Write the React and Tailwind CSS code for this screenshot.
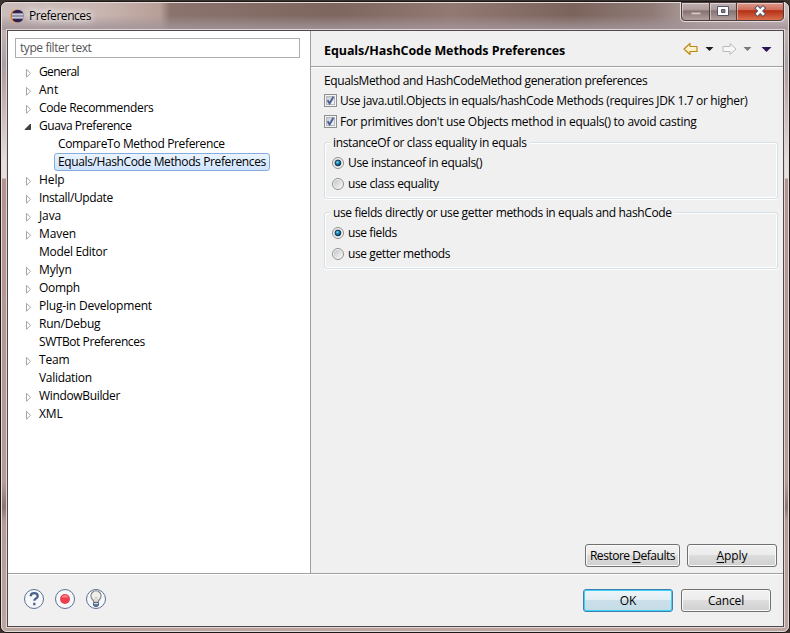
const ROWS = [
  ['General', 'tracking-[-0.6px]', 'closed'],
  ['Ant', 'tracking-[0px]', 'closed'],
  ['Code Recommenders', 'tracking-[-0.34px]', 'closed'],
  ['Guava Preference', 'tracking-[-0.45px]', 'open'],
  ['CompareTo Method Preference', 'tracking-[-0.36px]', 'child'],
  ['Equals/HashCode Methods Preferences', 'tracking-[-0.38px]', 'selected'],
  ['Help', 'tracking-[-0.1px]', 'closed'],
  ['Install/Update', 'tracking-[-0.36px]', 'closed'],
  ['Java', 'tracking-[-0.1px]', 'closed'],
  ['Maven', 'tracking-[-0.1px]', 'closed'],
  ['Model Editor', 'tracking-[-0.3px]', 'leaf'],
  ['Mylyn', 'tracking-[-0.1px]', 'closed'],
  ['Oomph', 'tracking-[-0.3px]', 'closed'],
  ['Plug-in Development', 'tracking-[-0.2px]', 'closed'],
  ['Run/Debug', 'tracking-[-0.2px]', 'closed'],
  ['SWTBot Preferences', 'tracking-[-0.43px]', 'leaf'],
  ['Team', 'tracking-[-0.2px]', 'closed'],
  ['Validation', 'tracking-[-0.3px]', 'leaf'],
  ['WindowBuilder', 'tracking-[-0.34px]', 'closed'],
  ['XML', 'tracking-[-0.1px]', 'closed'],
];

function Twisty({ kind }) {
  return (
    <svg className="w-[20px] h-[18px] shrink-0" viewBox="0 0 20 18">
      {kind === 'closed' && <path d="M7.500 6.300v8l4-4z" fill="#fff" stroke="#a6a6a6" />}
      {kind === 'open' && <path d="M11.500 7v5.500H6z" fill="#404040" stroke="#262626" strokeWidth=".8" />}
    </svg>
  );
}

function TreeRow({ label, track, kind }) {
  if (kind === 'child' || kind === 'selected') {
    const look = kind === 'selected'
      ? 'border-[#84acdd] bg-linear-to-b from-[#ebf4fe] to-[#cfe4fe]'
      : 'border-transparent';
    return (
      <div className="flex h-[18px] pl-[35px]">
        <span className={`flex h-[18px] items-center rounded-[3px] border px-[3px] whitespace-nowrap ${look} ${kind === 'selected' ? 'w-[216px]' : ''} ${track}`}>{label}</span>
      </div>
    );
  }
  return (
    <div className="flex h-[18px] items-center">
      <Twisty kind={kind} />
      <span className={`whitespace-nowrap ${track}`}>{label}</span>
    </div>
  );
}

function Check({ children, track }) {
  return (
    <div className="flex h-[21px] items-center">
      <svg className="mr-[3px] size-[13px] shrink-0" viewBox="0 0 13 13">
        <defs>
          <linearGradient id="ck" x1="0" y1="0" x2="1" y2="1">
            <stop offset="0" stopColor="#c4c9cf" />
            <stop offset="1" stopColor="#f6f6f6" />
          </linearGradient>
        </defs>
        <rect x=".5" y=".5" width="12" height="12" fill="#f4f4f4" stroke="#8e8f8f" />
        <rect x="2.5" y="2.5" width="8" height="8" fill="url(#ck)" stroke="#b5bac1" />
        <path d="M3.6 6.3l2 3.2L9.4 2.8" fill="none" stroke="#4a5f97" strokeWidth="1.9" />
      </svg>
      <span className={`pt-px whitespace-nowrap ${track}`}>{children}</span>
    </div>
  );
}

function Radio({ on, children, track }) {
  return (
    <div className="flex h-[21px] items-center pl-[7px]">
      <svg className="mr-[4px] size-[12px] shrink-0" viewBox="0 0 12 12">
        <defs>
          <linearGradient id="rd" x1="0" y1="0" x2="1" y2="1">
            <stop offset="0" stopColor="#bfc3c8" />
            <stop offset="1" stopColor="#f8f8f8" />
          </linearGradient>
          <radialGradient id="dot" cx=".4" cy=".35" r=".6">
            <stop offset="0" stopColor="#7fdcf8" />
            <stop offset=".5" stopColor="#1b86b5" />
            <stop offset="1" stopColor="#0b3a5c" />
          </radialGradient>
        </defs>
        <circle cx="6" cy="6" r="5.5" fill="#f4f4f4" stroke="#8e8f8f" />
        <circle cx="6" cy="6" r="4" fill="url(#rd)" />
        {on && <circle cx="6" cy="6" r="2.9" fill="url(#dot)" stroke="#16344e" strokeWidth=".9" />}
      </svg>
      <span className={`pt-px whitespace-nowrap ${track}`}>{children}</span>
    </div>
  );
}

function Group({ title, track, className, children }) {
  return (
    <fieldset className={`mx-0 w-[454px] rounded-[3px] border border-[#d5dfe5] shadow-[inset_1px_1px_0_#fff,inset_-1px_-1px_0_#fff,0_1px_0_#fff] ${className}`}>
      <div className="-mt-[9px] ml-[5px] flex h-[18px] w-fit items-center bg-[#f0f0f0] px-[3px]">
        <span className={`whitespace-nowrap ${track}`}>{title}</span>
      </div>
      {children}
    </fieldset>
  );
}

function Button({ children, className, primary }) {
  const look = primary
    ? 'border-[#3c7fb1] bg-[linear-gradient(#edf4f8_0%,#e2eef4_47%,#cbdfe9_50%,#c5dce7_100%)] shadow-[inset_0_0_0_1px_#3fd0f7]'
    : 'border-[#707070] bg-[linear-gradient(#f2f2f2_0%,#ebebeb_48%,#dddddd_50%,#cfcfcf_100%)] shadow-[inset_0_0_0_1px_#fafafa]';
  return (
    <button className={`flex h-[23px] items-center justify-center rounded-[3px] border pt-px whitespace-nowrap ${look} ${className}`}>
      {children}
    </button>
  );
}

function TitleBar() {
  return (
    <div className="flex h-[26px] items-start">
      <svg className="mt-[6px] ml-[4px] size-[14px]" viewBox="0 0 14 14">
        <circle cx="6.6" cy="7" r="6.6" fill="#f09431" />
        <circle cx="7.7" cy="7" r="6.3" fill="#2c2255" />
        <path d="M1.8 5.1h11.8M1.4 7h12.5M1.8 8.9h11.8" stroke="#fff" strokeWidth="1.1" />
      </svg>
      <span className="mt-[4px] ml-[5px] leading-[18px] tracking-[-0.45px] [text-shadow:0_0_6px_#fff,0_0_8px_#fff,0_0_14px_#fff]">Preferences</span>
      <svg className="-mt-px ml-auto h-[20px] w-[105px]" viewBox="0 0 105 20">
        <defs>
          <linearGradient id="cap" x2="0" y2="1">
            <stop offset="0" stopColor="#c3b5b4" />
            <stop offset=".46" stopColor="#aa9997" />
            <stop offset=".48" stopColor="#85716f" />
            <stop offset="1" stopColor="#b19f9e" />
          </linearGradient>
          <linearGradient id="cls" x2="0" y2="1">
            <stop offset="0" stopColor="#dfa298" />
            <stop offset=".44" stopColor="#cf6c58" />
            <stop offset=".48" stopColor="#b52f15" />
            <stop offset="1" stopColor="#da6f4b" />
          </linearGradient>
        </defs>
        <path d="M.5 0v15q0 4.5 4.500 4.500h95q4.500 0 4.500-4.500V0" fill="none" stroke="#e5dbdb" />
        <path d="M1.500 0v14q0 4 4 4h24.500V0z" fill="url(#cap)" />
        <path d="M30 0h27v18H30z" fill="url(#cap)" />
        <path d="M57 0h46.500v14q0 4-4 4H57z" fill="url(#cls)" />
        <path d="M1.500 .500h102v13.500q0 4.500-4.500 4.500H6q-4.500 0-4.500-4.500zM29.500 0v18M56.500 0v18" fill="none" stroke="#4b3b3b" />
        <path d="M2.500 1.500h26M30.500 1.500h25M57.500 1.500h45M30.500 1.500v16M2.500 1.500v13M57.500 1.500v16" fill="none" stroke="#fff" opacity=".45" />
        <rect x="11.500" y="10.500" width="9" height="2" fill="#d5cecd" stroke="#a39796" strokeWidth=".6" />
        <path d="M37.500 4.500h11v9h-11zM41.500 7.500v3h3.500V7.500z" fillRule="evenodd" fill="#fff" stroke="#56566c" />
        <path d="M77.500 6.200l5.500 5.600m0-5.600l-5.500 5.600" stroke="#565365" strokeWidth="4.600" strokeLinecap="square" />
        <path d="M77.500 6.200l5.500 5.600m0-5.600l-5.500 5.600" stroke="#fff" strokeWidth="2.600" strokeLinecap="square" />
      </svg>
    </div>
  );
}

function NavIcons() {
  return (
    <svg className="mt-[11px] ml-auto mr-[10px] h-[14px] w-[90px]" viewBox="0.5 0 90 14">
      <defs>
        <linearGradient id="arrow" x2="0" y2="1">
          <stop offset="0" stopColor="#fffdf0" />
          <stop offset="1" stopColor="#fae6a4" />
        </linearGradient>
      </defs>
      <path d="M1.500 7L7.500 1.500v3h7v5h-7v3z" fill="url(#arrow)" stroke="#c08716" strokeWidth="1.200" strokeLinejoin="round" />
      <path d="M23 5h8l-4 4z" fill="#1c1c1c" />
      <path d="M53.500 7L47.500 1.500v3h-7v5h7v3z" fill="#f7f7f7" stroke="#b9b9b9" strokeLinejoin="round" />
      <path d="M61 5h8l-4 4z" fill="#777" />
      <path d="M79 5h10l-5 5z" fill="#2b1450" />
    </svg>
  );
}

function FooterIcons() {
  return (
    <svg className="-mt-[2px] h-[22px] w-[84px]" viewBox="0 0 84 22">
      <g fill="#f7f8f9" stroke="#5d7196">
        <circle cx="10" cy="11" r="9.500" />
        <circle cx="41" cy="11" r="9.500" />
        <circle cx="72" cy="11" r="9.500" />
      </g>
      <path d="M6.700 8.300q0-3.200 3.500-3.200t3.500 2.900q0 1.600-1.700 2.500t-1.700 2.300M10.300 14.800v2.400" fill="none" stroke="#4a628c" strokeWidth="2.300" />
      <circle cx="41" cy="11" r="5" fill="#ed3f4d" />
      <path d="M37.500 9.500a3.700 3.700 0 0 1 7 0z" fill="#f7848a" />
      <path d="M70 14.500q0-1.700-1.700-3.300a5 5 0 1 1 7.400 0q-1.700 1.600-1.700 3.300z" fill="#eeeeea" stroke="#8b8780" strokeWidth="1.300" />
      <path d="M71 13.500V9.500h2v4" fill="none" stroke="#c5c1b8" strokeWidth=".8" />
      <path d="M69.500 14.500h5v3l-1.500 1h-2l-1.500-1z" fill="#d9e0ea" stroke="#4f678f" />
      <path d="M70 17h4" stroke="#3f5780" strokeWidth="1.500" />
    </svg>
  );
}

export default function App() {
  return (
    <div className="h-[633px] w-[790px] overflow-hidden bg-[#3a322d] pt-px font-['Open_Sans','Noto_Sans',sans-serif] text-[12px] leading-[18px] text-black">
      <div className="h-[632px] w-[790px] rounded-[7px] border border-[#1d1818] bg-[linear-gradient(#a39092_0px,#c0b2b4_30px,#a8a0a8_62px,#b9a5a5_80px,#e6dddd_160px,#e8e0e0_176px,#b49490_177px,#b79b96_480px,#8d7573_505px,#b79b96_520px,#b9a29d_600px,#bca6a0_100%)]">
        <div className="h-[630px] w-[788px] rounded-[6px] border border-[#e4dbdb] bg-[linear-gradient(#a3959a00_45%,#a3949acc_90%),linear-gradient(90deg,#cbbdbb_0px,#c9b5b0_100px,#b79f97_158px,#8a746d_168px,#7d665e_330px,#927a73_450px,#7b645b_570px,#8f7a76_650px,#b5a6a5_700px,#c8bbbb_788px)] bg-[length:100%_27px] bg-no-repeat pr-[3px] pl-[4px]">
          <TitleBar />
          <div className="h-[599px] w-[779px] border border-[#ded5d4]">
            <div className="flex h-[597px] w-[777px] flex-col border border-[#51474a] bg-[#f0f0f0]">
              <div className="flex h-[542px]">
                <div className="w-[302px] bg-white pt-[7px] pl-[7px]">
                  <div className="flex h-[20px] w-[285px] items-center border border-[#abadb3] pl-[4px] tracking-[-0.42px] text-[#555]">type filter text</div>
                  <div className="mt-[5px] pl-[4px]">
                    {ROWS.map(([label, track, kind]) => (
                      <TreeRow key={label} label={label} track={track} kind={kind} />
                    ))}
                  </div>
                </div>
                <div className="flex flex-1 flex-col border-l border-[#a0a0a0]">
                  <div className="flex h-[36px] border-b border-[#a0a0a0] pl-[13px]">
                    <span className="mt-[11px] text-[12.5px] font-bold whitespace-nowrap tracking-[-0.08px]">Equals/HashCode Methods Preferences</span>
                    <NavIcons />
                  </div>
                  <div className="flex-1 border-t border-white pt-[4px] pl-[13px]">
                    <div className="whitespace-nowrap tracking-[-0.37px]">EqualsMethod and HashCodeMethod generation preferences</div>
                    <Check track="tracking-[-0.33px]">Use java.util.Objects in equals/hashCode Methods (requires JDK 1.7 or higher)</Check>
                    <Check track="tracking-[-0.27px]">For primitives don't use Objects method in equals() to avoid casting</Check>
                    <Group className="mt-[10px] h-[57px]" title="instanceOf or class equality in equals" track="tracking-[-0.34px]">
                      <Radio on track="tracking-[-0.34px]">Use instanceof in equals()</Radio>
                      <Radio track="tracking-[-0.38px]">use class equality</Radio>
                    </Group>
                    <Group className="mt-[13px] h-[57px]" title="use fields directly or use getter methods in equals and hashCode" track="tracking-[-0.36px]">
                      <Radio on track="tracking-[-0.4px]">use fields</Radio>
                      <Radio track="tracking-[-0.4px]">use getter methods</Radio>
                    </Group>
                  </div>
                  <div className="flex gap-[7px] pb-[6px] pl-[274px]">
                    <Button className="w-[95px] tracking-[-0.47px]"><span>Restore <span className="underline underline-offset-2">D</span>efaults</span></Button>
                    <Button className="w-[90px] tracking-[-0.1px]"><span><span className="underline underline-offset-2">A</span>pply</span></Button>
                  </div>
                </div>
              </div>
              <div className="flex flex-1 items-center border-t border-[#a0a0a0] pr-[12px] pl-[16px] shadow-[inset_0_1px_0_#fff]">
                <FooterIcons />
                <div className="ml-auto flex gap-[8px]">
                  <Button primary className="w-[90px] tracking-[-0.1px]">OK</Button>
                  <Button className="w-[90px] tracking-[-0.15px]">Cancel</Button>
                </div>
              </div>
            </div>
          </div>
        </div>
      </div>
    </div>
  );
}
